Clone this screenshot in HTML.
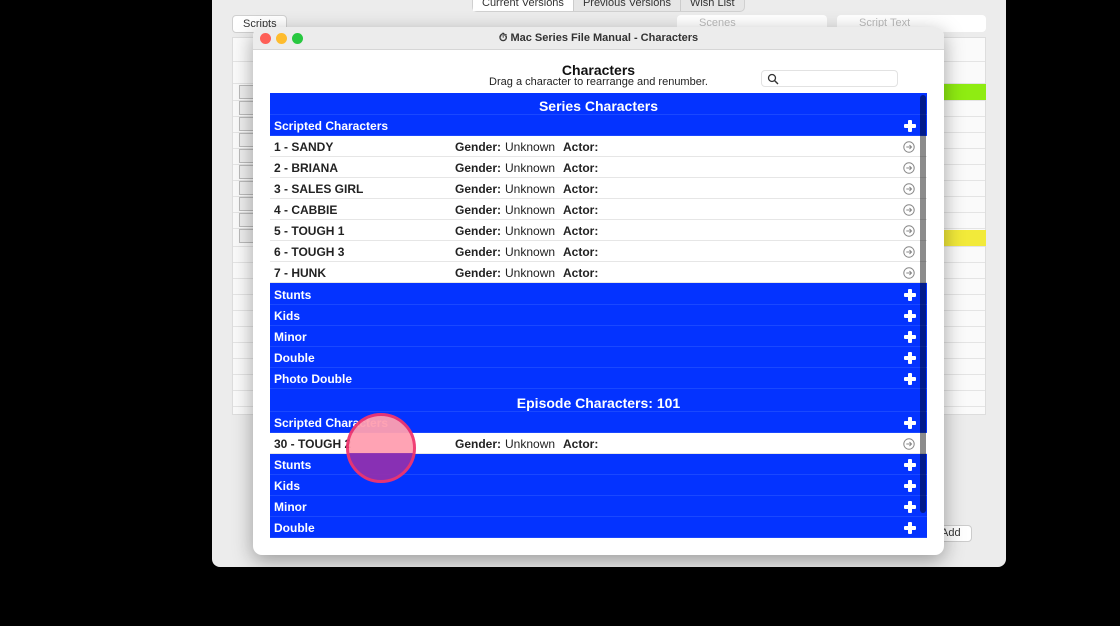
<!DOCTYPE html><html><head><style>
*{margin:0;padding:0;box-sizing:border-box}
body{width:1120px;height:626px;background:#000;position:relative;overflow:hidden;font-family:"Liberation Sans",Arial,sans-serif}
.abs{position:absolute}
.app{left:212px;top:0;width:794px;height:567px;background:#ececec;border-radius:0 0 8px 8px}
.tabs{left:472px;top:-6px;height:18px;display:flex;border:1px solid #d0d0d0;border-radius:5px;background:#e6e6e6;font-size:11px;color:#333}
.tabs div{padding:0 9px;line-height:16px;border-left:1px solid #ccc}
.tabs div:first-child{background:#fff;border-left:none}
.bgtable{left:232px;top:37px;width:754px;height:378px;background:#fafafa;border:1px solid #ddd}
.bgrow{position:absolute;left:0;width:100%;height:1px;background:#e4e4e4}
.chk{position:absolute;left:6px;width:15px;height:14px;border:1px solid #bbb;background:#eee}
.win{left:253px;top:27px;width:691px;height:528px;background:#fff;border-radius:9px;box-shadow:0 6px 20px rgba(0,0,0,.35);overflow:hidden}
.tb{height:23px;background:#ececec;border-bottom:1px solid #d6d6d6;text-align:center;font-size:11px;color:#333;font-weight:bold;line-height:22px}
.dot{position:absolute;top:6px;width:11px;height:11px;border-radius:50%}
.tbl{left:17px;top:66px;width:657px;height:445px;background:#0433ff;overflow:hidden}
.r{position:absolute;left:0;width:657px;height:21px;font-size:12px;font-weight:bold;line-height:23px;padding-left:4px;color:#fff;border-bottom:1px solid #1a48ff}
.w{background:#fff;color:#222;border-bottom:1px solid #e6e6e6}
.h{text-align:center;font-size:14px;padding:0;height:22px;line-height:26px}
.plus{position:absolute;right:11px;top:5px;width:12px;height:12px}
.plus:before{content:"";position:absolute;left:4px;top:0;width:4px;height:12px;background:#fff;border-radius:1px}
.plus:after{content:"";position:absolute;left:0;top:4px;width:12px;height:4px;background:#fff;border-radius:1px}
.g{position:absolute;left:185px}
.g span{font-weight:normal;margin-left:4px}
.a{position:absolute;left:293px}
.arr{position:absolute;right:12px;top:5px;width:12px;height:12px}
</style></head><body>
<div class="abs app"></div>
<div class="abs tabs"><div>Current Versions</div><div>Previous Versions</div><div>Wish List</div></div>
<div class="abs" style="left:232px;top:15px;width:55px;height:18px;background:#fff;border:1px solid #d0d0d0;border-radius:4px;font-size:11px;padding-left:10px;line-height:16px;color:#333">Scripts</div>
<div class="abs" style="left:677px;top:15px;width:150px;height:17px;background:#fff;border-radius:4px;font-size:11px;color:#bbb;padding-left:22px;line-height:17px">Scenes</div>
<div class="abs" style="left:837px;top:15px;width:149px;height:17px;background:#fff;border-radius:4px;font-size:11px;color:#bbb;padding-left:22px;line-height:17px">Script Text</div>
<div class="abs bgtable">
<div style="position:absolute;left:711px;top:46px;width:42px;height:16px;background:#8fec12"></div>
<div style="position:absolute;left:711px;top:192px;width:42px;height:16px;background:#f2ea3a"></div>
<div class="bgrow" style="top:23px"></div><div class="bgrow" style="top:45px"></div>
<div class="bgrow" style="top:62px"></div><div class="bgrow" style="top:78px"></div><div class="bgrow" style="top:94px"></div><div class="bgrow" style="top:110px"></div><div class="bgrow" style="top:126px"></div><div class="bgrow" style="top:142px"></div><div class="bgrow" style="top:158px"></div><div class="bgrow" style="top:174px"></div><div class="bgrow" style="top:190px"></div><div class="bgrow" style="top:208px"></div><div class="bgrow" style="top:224px"></div><div class="bgrow" style="top:240px"></div><div class="bgrow" style="top:256px"></div><div class="bgrow" style="top:272px"></div><div class="bgrow" style="top:288px"></div><div class="bgrow" style="top:304px"></div><div class="bgrow" style="top:320px"></div><div class="bgrow" style="top:336px"></div><div class="bgrow" style="top:352px"></div><div class="bgrow" style="top:368px"></div>
<div class="chk" style="top:47px"></div><div class="chk" style="top:63px"></div><div class="chk" style="top:79px"></div><div class="chk" style="top:95px"></div><div class="chk" style="top:111px"></div><div class="chk" style="top:127px"></div><div class="chk" style="top:143px"></div><div class="chk" style="top:159px"></div><div class="chk" style="top:175px"></div><div class="chk" style="top:191px"></div>
</div>
<div class="abs" style="left:930px;top:525px;width:42px;height:17px;background:#fff;border:1px solid #ccc;border-radius:4px;font-size:11px;line-height:15px;padding-left:10px;color:#333">Add</div>
<div class="abs win">
<div class="tb">⏱ Mac Series File Manual - Characters</div>
<div class="dot" style="left:7px;background:#fe5f57"></div><div class="dot" style="left:23px;background:#febc2e"></div><div class="dot" style="left:39px;background:#28c840"></div>
<div class="abs" style="left:0;width:691px;top:35px;text-align:center;font-size:14px;font-weight:bold;color:#111">Characters</div>
<div class="abs" style="left:0;width:691px;top:49px;text-align:center;font-size:11px;color:#222">Drag a character to rearrange and renumber.</div>
<div class="abs" style="left:508px;top:43px;width:137px;height:17px;border:1px solid #e2e2e2;border-radius:4px">
<svg width="12" height="12" style="position:absolute;left:5px;top:2px" viewBox="0 0 12 12"><circle cx="5" cy="5" r="3.5" fill="none" stroke="#333" stroke-width="1.3"/><path d="M7.5 7.5L11 11" stroke="#333" stroke-width="1.4"/></svg></div>
<div class="abs tbl">
<svg width="0" height="0" style="position:absolute"><defs><symbol id="ar" viewBox="0 0 12 12"><circle cx="6" cy="6" r="5.2" fill="none" stroke="#888" stroke-width="1"/><path d="M3.3 6H8.5M6.5 4L8.5 6 6.5 8" fill="none" stroke="#888" stroke-width="1"/></symbol></defs></svg>
<div class="r h" style="top:0">Series Characters</div>
<div class="r" style="top:22px">Scripted Characters<span class="plus"></span></div>
<div class="r w" style="top:43px">1 - SANDY<span class="g">Gender:<span>Unknown</span></span><span class="a">Actor:</span><svg class="arr"><use href="#ar"/></svg></div>
<div class="r w" style="top:64px">2 - BRIANA<span class="g">Gender:<span>Unknown</span></span><span class="a">Actor:</span><svg class="arr"><use href="#ar"/></svg></div>
<div class="r w" style="top:85px">3 - SALES GIRL<span class="g">Gender:<span>Unknown</span></span><span class="a">Actor:</span><svg class="arr"><use href="#ar"/></svg></div>
<div class="r w" style="top:106px">4 - CABBIE<span class="g">Gender:<span>Unknown</span></span><span class="a">Actor:</span><svg class="arr"><use href="#ar"/></svg></div>
<div class="r w" style="top:127px">5 - TOUGH 1<span class="g">Gender:<span>Unknown</span></span><span class="a">Actor:</span><svg class="arr"><use href="#ar"/></svg></div>
<div class="r w" style="top:148px">6 - TOUGH 3<span class="g">Gender:<span>Unknown</span></span><span class="a">Actor:</span><svg class="arr"><use href="#ar"/></svg></div>
<div class="r w" style="top:169px">7 - HUNK<span class="g">Gender:<span>Unknown</span></span><span class="a">Actor:</span><svg class="arr"><use href="#ar"/></svg></div>
<div class="r" style="top:191px">Stunts<span class="plus"></span></div>
<div class="r" style="top:212px">Kids<span class="plus"></span></div>
<div class="r" style="top:233px">Minor<span class="plus"></span></div>
<div class="r" style="top:254px">Double<span class="plus"></span></div>
<div class="r" style="top:275px">Photo Double<span class="plus"></span></div>
<div class="r h" style="top:297px">Episode Characters: 101</div>
<div class="r" style="top:319px">Scripted Characters<span class="plus"></span></div>
<div class="r w" style="top:340px">30 - TOUGH 2<span class="g">Gender:<span>Unknown</span></span><span class="a">Actor:</span><svg class="arr"><use href="#ar"/></svg></div>
<div class="r" style="top:361px">Stunts<span class="plus"></span></div>
<div class="r" style="top:382px">Kids<span class="plus"></span></div>
<div class="r" style="top:403px">Minor<span class="plus"></span></div>
<div class="r" style="top:424px">Double<span class="plus"></span></div>
<div class="abs" style="left:650px;top:2px;width:6px;height:418px;background:rgba(0,0,0,.45);border-radius:3px"></div>
</div>
</div>
<div class="abs" style="left:346px;top:413px;width:70px;height:70px;border-radius:50%;border:3px solid #f0356e;background:linear-gradient(#ff9fb0 0 58%,#9030b0 58%);opacity:.95"></div>
</body></html>
